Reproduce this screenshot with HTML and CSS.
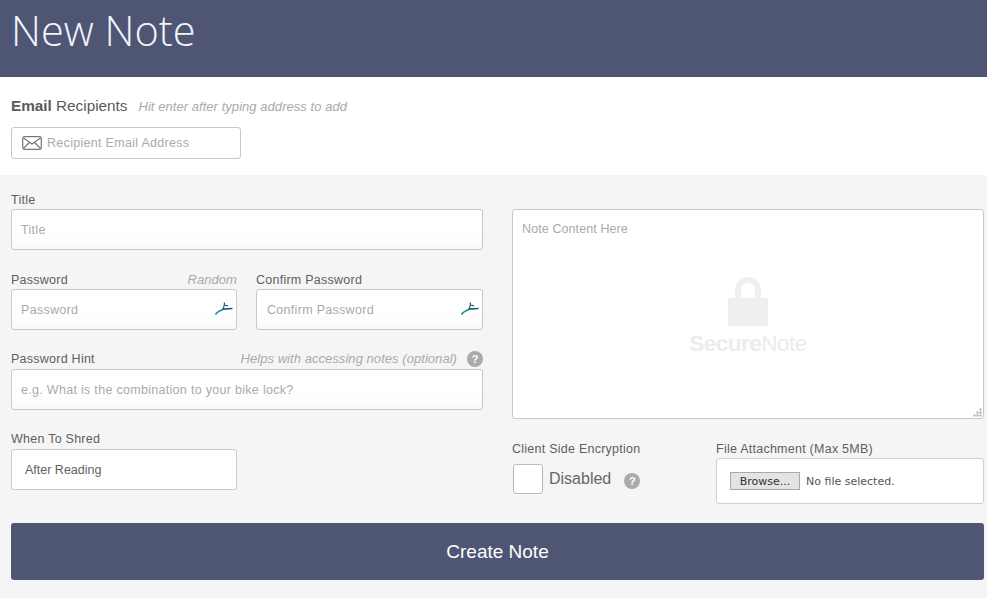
FILE: index.html
```html
<!DOCTYPE html>
<html lang="en">
<head>
  <meta charset="UTF-8" />
  <title>New Note</title>
  <link rel="stylesheet" href="styles.css">
</head>
<body>
  <header class="page-head">
    <h1>New Note</h1>
  </header>

  <section class="recipients">
    <div class="recipients-title">
      <span class="recipients-label"><b>Email</b> Recipients</span>
      <em class="note">Hit enter after typing address to add</em>
    </div>
    <div class="recipient-box">
      <svg class="mail-icon" width="20" height="14" viewBox="0 0 20 14" fill="none" stroke="#777" stroke-width="1.2">
        <rect x="0.7" y="0.7" width="18.6" height="12.6" rx="2" />
        <path d="M1.5 2l8.5 6 8.5-6M1.5 12.5l5.8-6M18.5 12.5l-5.8-6" />
      </svg>
      <input type="text" placeholder="Recipient Email Address" />
    </div>
  </section>

  <form class="note-form">
    <div class="columns">
      <div class="col-left">
        <div class="input-group">
          <label>Title</label>
          <input class="field" type="text" placeholder="Title" />
        </div>

        <div class="pass-row">
          <div class="input-group">
            <label>Password <em class="note">Random</em></label>
            <div class="pass-box">
              <input class="field" type="password" placeholder="Password" />
              <svg class="runner" width="18" height="13" viewBox="0 0 18 13" fill="none">
                <path d="M0.5 12.5C2.5 9.5 5 8.5 8 7.5" stroke="#1c8c9c" stroke-width="1.6" />
                <path d="M7.5 7.2L17.5 6.5" stroke="#17606c" stroke-width="1.7" />
                <path d="M8 7C9 5 9.5 3 9.5 0.5M9.5 3L13 3.8" stroke="#17606c" stroke-width="1.2" />
              </svg>
            </div>
          </div>
          <div class="input-group">
            <label>Confirm Password</label>
            <div class="pass-box">
              <input class="field" type="password" placeholder="Confirm Password" />
              <svg class="runner" width="18" height="13" viewBox="0 0 18 13" fill="none">
                <path d="M0.5 12.5C2.5 9.5 5 8.5 8 7.5" stroke="#1c8c9c" stroke-width="1.6" />
                <path d="M7.5 7.2L17.5 6.5" stroke="#17606c" stroke-width="1.7" />
                <path d="M8 7C9 5 9.5 3 9.5 0.5M9.5 3L13 3.8" stroke="#17606c" stroke-width="1.2" />
              </svg>
            </div>
          </div>
        </div>

        <div class="input-group raised">
          <label>Password Hint
            <span class="hint-right"><em class="note">Helps with accessing notes (optional)</em><span class="help">?</span></span>
          </label>
          <input class="field" type="text" placeholder="e.g. What is the combination to your bike lock?" />
        </div>

        <div class="input-group shred raised">
          <label>When To Shred</label>
          <div class="shred-box">After Reading</div>
        </div>
      </div>

      <div class="col-right">
        <div class="content-box">
          <textarea placeholder="Note Content Here"></textarea>
          <div class="watermark">
            <svg width="40" height="50" viewBox="0 0 40 50">
              <path d="M7 22V13a13 13 0 0 1 26 0v9h-6V13a7 7 0 0 0-14 0v9z" fill="#efefef" />
              <rect x="0" y="21" width="40" height="28" fill="#efefef" />
            </svg>
            <div class="wm-text"><b>Secure</b>Note</div>
          </div>
          <svg class="grip" width="9" height="9" viewBox="0 0 9 9" fill="#aaa">
            <rect x="6.5" y="0.5" width="2" height="2" />
            <rect x="3.5" y="3.5" width="2" height="2" />
            <rect x="6.5" y="3.5" width="2" height="2" />
            <rect x="0.5" y="6.5" width="2" height="2" />
            <rect x="3.5" y="6.5" width="2" height="2" />
            <rect x="6.5" y="6.5" width="2" height="2" />
          </svg>
        </div>

        <div class="options">
          <div class="encrypt">
            <label>Client Side Encryption</label>
            <div class="encrypt-row">
              <span class="check"></span>
              <span class="encrypt-state">Disabled</span>
              <span class="help">?</span>
            </div>
          </div>
          <div class="attach">
            <label>File Attachment (Max 5MB)</label>
            <div class="attach-box">
              <button type="button" class="browse">Browse...</button>
              <span class="no-file">No file selected.</span>
            </div>
          </div>
        </div>
      </div>
    </div>

    <button type="submit" class="create">Create Note</button>
  </form>
</body>
</html>
```

FILE: styles.css
```css
* {
  margin: 0;
  padding: 0;
  box-sizing: border-box;
}

body {
  font-family: "Liberation Sans", Arial, sans-serif;
  background: #f5f5f5;
  color: #5f5f5f;
  font-size: 12.5px;
  overflow: hidden;
}

.page-head {
  height: 77px;
  background: #4e5673;
  padding: 5px 11px 0;
}

h1 {
  font-family: "Open Sans", sans-serif;
  font-weight: 300;
  font-size: 41.5px;
  line-height: 50px;
  color: #f0f4fb;
}

.note {
  font-style: italic;
  color: #aaa;
  font-size: 13px;
  line-height: 1;
  font-weight: normal;
  letter-spacing: 0.05px;
}

.recipients {
  height: 98px;
  background: #fff;
  padding: 20px 11px 0;
}

.recipients-title {
  display: flex;
  align-items: baseline;
  gap: 11px;
  height: 30px;
}

.recipients-label {
  font-size: 15.3px;
  color: #5a5a5a;
}

.recipient-box {
  width: 230px;
  height: 32px;
  border: 1px solid #c8c8c8;
  border-radius: 3px;
  background: #fff;
  display: flex;
  align-items: center;
  padding-left: 10px;
  gap: 5px;
}

.recipient-box input {
  border: none;
  outline: none;
  flex: 1;
  min-width: 0;
  font: 12.5px "Liberation Sans", Arial, sans-serif;
  letter-spacing: 0.3px;
}

input::placeholder,
textarea::placeholder {
  color: #aaa;
  opacity: 1;
}

.note-form {
  padding: 17px 3px 0 11px;
}

.columns {
  display: flex;
  gap: 29px;
}

.col-left,
.col-right {
  width: 472px;
}

label {
  display: flex;
  align-items: baseline;
  justify-content: space-between;
  height: 17px;
  line-height: 17px;
  font-size: 12.5px;
  letter-spacing: 0.25px;
  color: #5f5f5f;
}

.input-group {
  margin-bottom: 22px;
}

.raised label {
  margin-top: -1px;
  margin-bottom: 1px;
}

.field {
  display: block;
  width: 100%;
  height: 41px;
  padding: 0 9px;
  border: 1px solid #c8c8c8;
  border-radius: 3px;
  outline: none;
  background: linear-gradient(#fff, #fff 60%, #f9f9f9);
  font: 12.5px "Liberation Sans", Arial, sans-serif;
  letter-spacing: 0.3px;
}

.pass-row {
  display: flex;
  gap: 19px;
}

.pass-row .input-group {
  width: 226px;
}

.pass-row .input-group + .input-group {
  width: 227px;
}

.pass-row .input-group + .input-group .field {
  padding-left: 10px;
}

.pass-box {
  position: relative;
}

.runner {
  position: absolute;
  right: 4px;
  top: 13px;
}

.hint-right {
  display: flex;
  align-items: center;
  gap: 10px;
  height: 17px;
  margin-top: -3px;
}

.help {
  display: inline-block;
  width: 16px;
  height: 16px;
  border-radius: 50%;
  background: #aaa;
  color: #fff;
  font-size: 11px;
  font-weight: bold;
  line-height: 16px;
  text-align: center;
  letter-spacing: 0;
}

.shred {
  width: 226px;
  margin-bottom: 0;
}

.shred-box {
  height: 41px;
  line-height: 40px;
  padding-left: 13px;
  border: 1px solid #c8c8c8;
  border-radius: 3px;
  background: #fff;
  color: #5f5f5f;
}

.col-right {
  padding-top: 17px;
}

.content-box {
  position: relative;
  height: 210px;
}

textarea {
  display: block;
  width: 100%;
  height: 100%;
  padding: 12px 9px;
  border: 1px solid #c8c8c8;
  border-radius: 3px;
  outline: none;
  resize: none;
  background: #fff;
  font: 12.5px "Liberation Sans", Arial, sans-serif;
  letter-spacing: 0.1px;
}

.watermark {
  position: absolute;
  left: 0;
  right: 0;
  top: 68px;
  display: flex;
  flex-direction: column;
  align-items: center;
  pointer-events: none;
}

.wm-text {
  margin-top: 4px;
  font-size: 22.5px;
  line-height: 26px;
  letter-spacing: -0.5px;
  color: #ececec;
}

.grip {
  position: absolute;
  right: 2px;
  bottom: 2px;
}

.options {
  display: flex;
  margin-top: 22px;
}

.encrypt {
  width: 204px;
}

.encrypt-row {
  display: flex;
  align-items: center;
  margin-top: 6px;
}

.check {
  width: 30px;
  height: 30px;
  margin-left: 1px;
  border: 1px solid #bbb;
  border-radius: 3px;
  background: #fff;
}

.encrypt-state {
  margin: -1px 13px 0 6px;
  font-size: 16px;
  color: #666;
}

.encrypt-row .help {
  margin-top: 3px;
}

.attach {
  width: 268px;
}

.attach-box {
  display: flex;
  align-items: center;
  height: 46px;
  padding-left: 13px;
  border: 1px solid #d0d0d0;
  border-radius: 3px;
  background: #fff;
}

.browse {
  width: 70px;
  height: 18px;
  border: 1px solid #aaa;
  background: #e3e3e3;
  color: #333;
  font: 11px "DejaVu Sans", sans-serif;
}

.no-file {
  margin-left: 6px;
  font: 11px "DejaVu Sans", sans-serif;
  color: #555;
}

.create {
  display: block;
  width: 973px;
  height: 57px;
  margin-top: 19px;
  border: none;
  border-radius: 3px;
  background: #4e5673;
  color: #fff;
  font: 19px "Liberation Sans", Arial, sans-serif;
}
```
